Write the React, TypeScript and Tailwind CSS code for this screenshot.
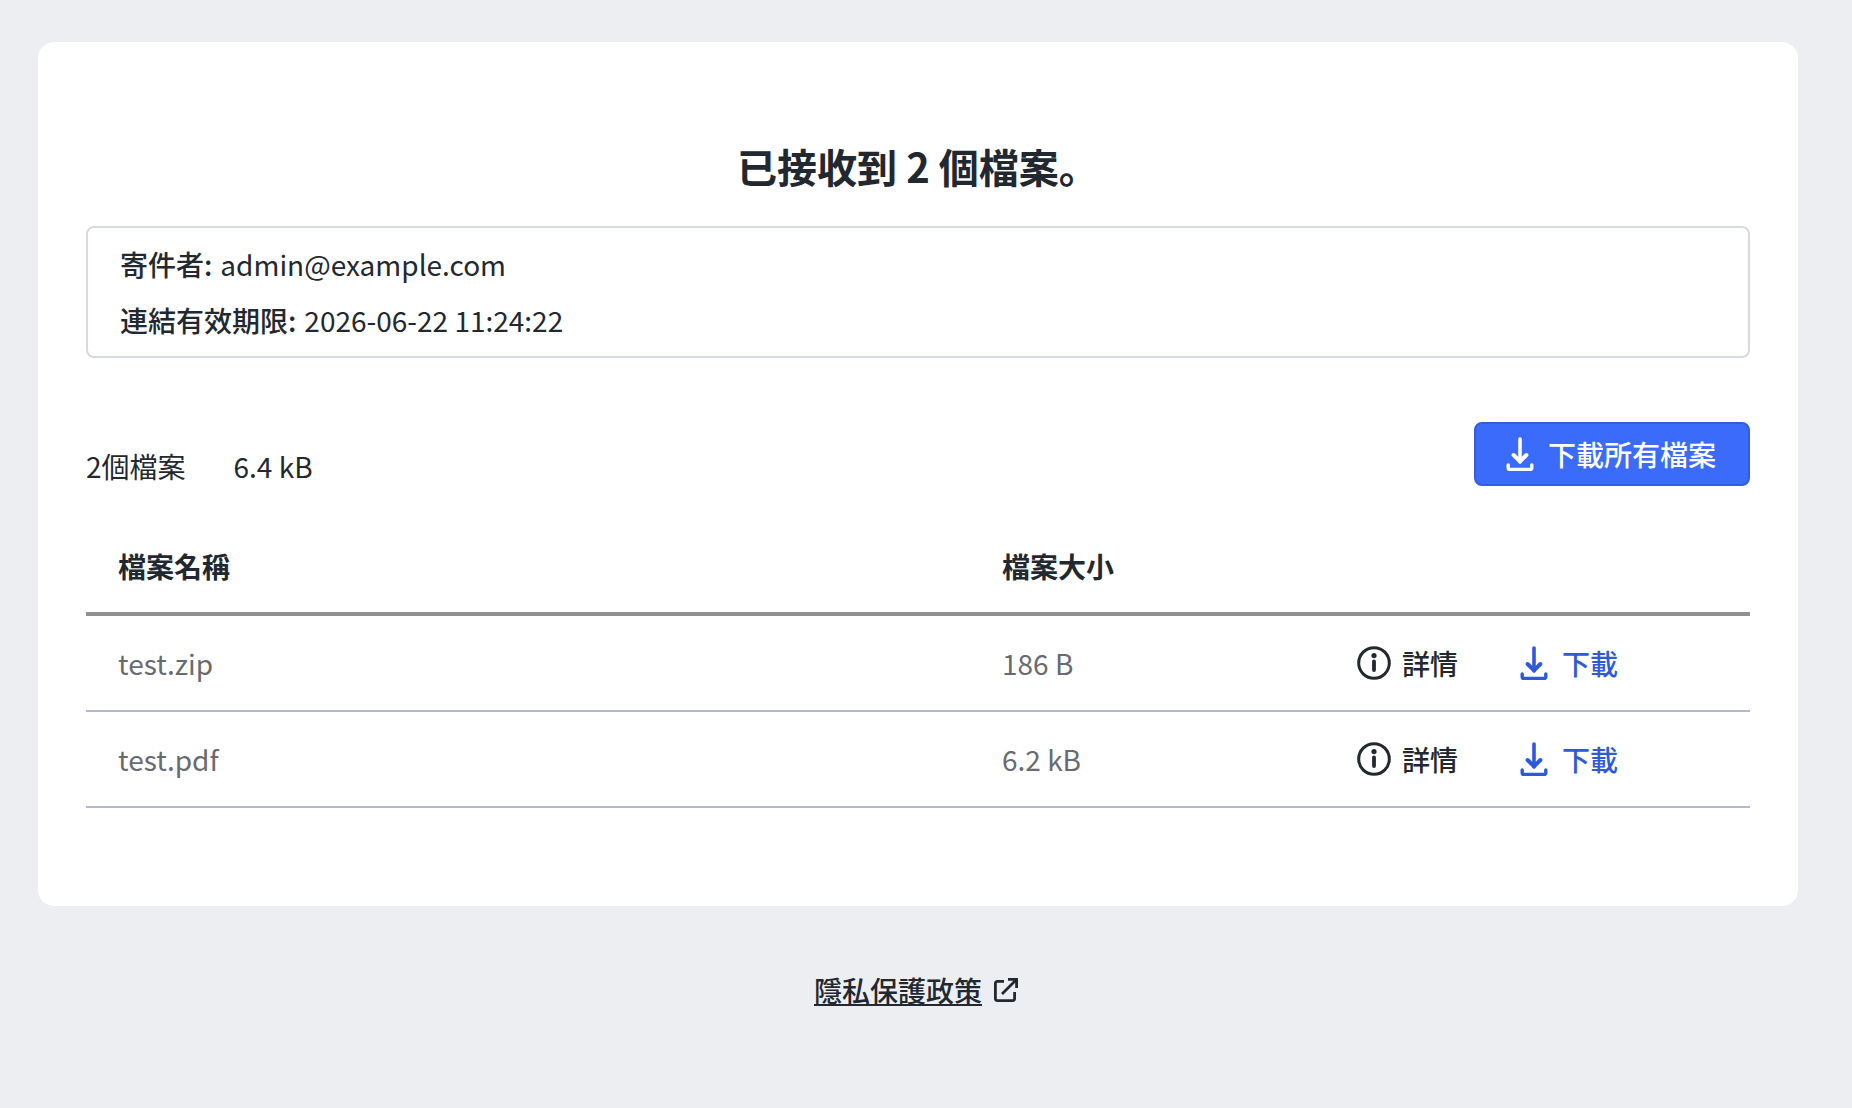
import React from "react";

type ReceivedFile = {
  id: number;
  name: string;
  size: string;
};

type IconProps = {
  className?: string;
};

const files: ReceivedFile[] = [
  { id: 1, name: "test.zip", size: "186 B" },
  { id: 2, name: "test.pdf", size: "6.2 kB" },
];

const DownloadIcon = ({ className }: IconProps) => (
  <svg
    viewBox="0 0 36 36"
    fill="none"
    stroke="currentColor"
    strokeLinecap="round"
    strokeLinejoin="round"
    aria-hidden="true"
    className={className}
  >
    <path d="M18 3v23" strokeWidth="3.6" />
    <path d="M11.6 19 18 25.4l6.4-6.4" strokeWidth="4" />
    <path
      d="M6.2 29v3a1.4 1.4 0 0 0 1.4 1.4h20.8a1.4 1.4 0 0 0 1.4-1.4V29"
      strokeWidth="3.4"
    />
  </svg>
);

const InfoIcon = ({ className }: IconProps) => (
  <svg
    viewBox="0 0 36 36"
    fill="none"
    stroke="currentColor"
    strokeLinecap="round"
    aria-hidden="true"
    className={className}
  >
    <circle cx="18" cy="18" r="15.3" strokeWidth="3" />
    <path d="M18 16.5V25" strokeWidth="3.8" />
    <circle cx="18" cy="10.6" r="2.6" fill="currentColor" stroke="none" />
  </svg>
);

const ExternalIcon = ({ className }: IconProps) => (
  <svg
    viewBox="0 0 32 32"
    fill="none"
    stroke="currentColor"
    strokeWidth="2.8"
    aria-hidden="true"
    className={className}
  >
    <path d="M14 7.4H7.4a2 2 0 0 0-2 2v15.2a2 2 0 0 0 2 2h15.2a2 2 0 0 0 2-2V18" />
    <path d="M18 5.4h8.6V14M26 6 12 20" />
  </svg>
);

const FileTable = () => (
  <table className="w-full table-fixed border-separate border-spacing-0 text-left">
    <thead>
      <tr className="h-24">
        <th className="w-17/32 border-b-4 border-[#919191] px-8 font-bold">
          檔案名稱
        </th>
        <th className="w-7/32 border-b-4 border-[#919191] px-8 font-bold">
          檔案大小
        </th>
        <th className="border-b-4 border-[#919191]" />
      </tr>
    </thead>
    <tbody>
      {files.map((file) => (
        <tr key={file.id} className="h-24 text-[#676b70]">
          <td className="border-b-2 border-[#b4b8c5] px-8">{file.name}</td>
          <td className="border-b-2 border-[#b4b8c5] px-8">{file.size}</td>
          <td className="border-b-2 border-[#b4b8c5] pl-[22px]">
            <div className="flex items-center gap-[58px] font-medium">
              <button
                type="button"
                className="flex items-center gap-2.5 text-[#22282f]"
              >
                <InfoIcon className="size-9" />
                詳情
              </button>
              <button
                type="button"
                className="flex items-center gap-2.5 text-[#2f59d9]"
              >
                <DownloadIcon className="size-9" />
                下載
              </button>
            </div>
          </td>
        </tr>
      ))}
    </tbody>
  </table>
);

export default function App() {
  return (
    <div className="min-h-screen bg-[#edeef2] pt-[42px] pr-[54px] pl-[38px] font-['Noto_Sans_CJK_JP','Noto_Sans_CJK_TC',sans-serif] text-[28px] leading-10 text-[#22282f]">
      <main className="rounded-2xl bg-white px-12 pt-24 pb-[98px]">
        <h1 className="text-center text-[40px] leading-14 font-bold">
          已接收到 2 個檔案。
        </h1>

        <section className="mt-8 rounded-lg border-2 border-[#d7d9e0] px-8 py-2">
          <p className="flex gap-2 py-2">
            <span className="font-medium">寄件者:</span>
            <span>admin@example.com</span>
          </p>
          <p className="flex gap-2 py-2">
            <span className="font-medium">連結有效期限:</span>
            <span>2026-06-22 11:24:22</span>
          </p>
        </section>

        <div className="mt-16 mb-[34px] flex items-end justify-between">
          <div className="flex gap-12">
            <span>2個檔案</span>
            <span>6.4 kB</span>
          </div>
          <button
            type="button"
            className="flex h-16 items-center gap-2.5 rounded-lg border-2 border-[#355dda] bg-[#3b6bfa] pr-8 pl-[26px] font-medium text-white"
          >
            <DownloadIcon className="size-9" />
            下載所有檔案
          </button>
        </div>

        <FileTable />
      </main>

      <footer className="flex justify-center py-16">
        <a href="#privacy" className="flex items-center gap-2">
          <span className="font-medium underline decoration-2 underline-offset-2">
            隱私保護政策
          </span>
          <ExternalIcon className="size-8" />
        </a>
      </footer>
    </div>
  );
}
